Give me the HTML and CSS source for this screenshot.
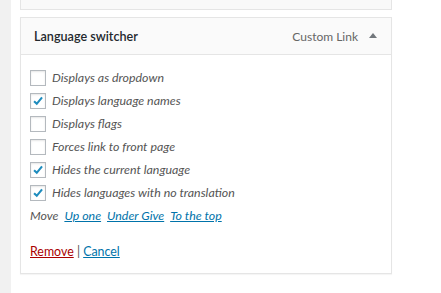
FILE: index.html
```html
<!DOCTYPE html>
<html lang="en">
<head>
  <meta charset="UTF-8">
  <title>Language switcher widget</title>
  <link rel="stylesheet" href="styles.css">
</head>
<body>
  <div class="side"></div>
  <div class="main">
    <div class="prev-box"></div>

    <div class="widget">
      <div class="widget-top">
        <span class="widget-title">Language switcher</span>
        <span class="widget-type">Custom Link</span>
        <span class="arrow"></span>
      </div>
      <div class="widget-inside">
        <label class="opt"><span class="box"></span>Displays as dropdown</label>
        <label class="opt"><span class="box checked"><svg viewBox="0 0 16 16"><path d="M3.5 8.2 L6.6 11.2 L12.6 3.8" /></svg></span>Displays language names</label>
        <label class="opt"><span class="box"></span>Displays flags</label>
        <label class="opt"><span class="box"></span>Forces link to front page</label>
        <label class="opt"><span class="box checked"><svg viewBox="0 0 16 16"><path d="M3.5 8.2 L6.6 11.2 L12.6 3.8" /></svg></span>Hides the current language</label>
        <label class="opt"><span class="box checked"><svg viewBox="0 0 16 16"><path d="M3.5 8.2 L6.6 11.2 L12.6 3.8" /></svg></span>Hides languages with no translation</label>

        <div class="move">
          Move <a href="#">Up one</a> <a href="#">Under Give</a> <a href="#">To the top</a>
        </div>

        <div class="actions">
          <a href="#" class="remove">Remove</a> | <a href="#">Cancel</a>
        </div>
      </div>
    </div>
  </div>
</body>
</html>
```

FILE: styles.css
```css
body {
  margin: 0;
  background: #fff;
  font-family: Lato, "Open Sans", sans-serif;
  font-size: 12.4px;
  color: #23282d;
  display: flex;
  height: 293px;
  overflow: hidden;
}

.side {
  width: 11px;
  background: #f1f1f1;
  flex-shrink: 0;
}

.main {
  padding-left: 9px;
}

.prev-box {
  width: 370px;
  height: 9px;
  margin-top: -1px;
  border: 1px solid #e5e5e5;
  background: #f9f9f9;
}

.widget {
  width: 370px;
  margin-top: 7px;
  border: 1px solid #e5e5e5;
  box-shadow: 0 1px 1px rgba(0, 0, 0, 0.04);
  background: #fff;
}

.widget-top {
  height: 36px;
  background: #fafafa;
  border-bottom: 1px solid #e5e5e5;
  display: flex;
  align-items: center;
  padding: 0 14px 0 13px;
}

.widget-title {
  font-weight: 600;
  font-size: 12.6px;
  flex: 1;
}

.widget-type {
  color: #666;
  font-size: 12px;
}

.arrow {
  margin-left: 11px;
  width: 0;
  height: 0;
  border-left: 4px solid transparent;
  border-right: 4px solid transparent;
  border-bottom: 5px solid #72777c;
  margin-top: -2px;
}

.widget-inside {
  padding: 11px 9px 14px 9px;
}

.opt {
  display: flex;
  align-items: center;
  height: 23px;
  font-style: italic;
  color: #555;
}

.box {
  width: 14px;
  height: 14px;
  border: 1px solid #b4b9be;
  background: #fff;
  box-shadow: inset 0 1px 2px rgba(0, 0, 0, 0.1);
  margin-right: 6px;
  display: flex;
}

.box svg {
  width: 14px;
  height: 14px;
  fill: none;
  stroke: #1e8cbe;
  stroke-width: 2.4;
}

.move {
  font-style: italic;
  color: #555;
  margin-top: 4px;
  height: 20px;
}

.move a {
  color: #0073aa;
  margin-left: 3px;
}

a {
  color: #0073aa;
}

.actions {
  margin-top: 16px;
  color: #555;
}

.actions .remove {
  color: #a00;
}
```
